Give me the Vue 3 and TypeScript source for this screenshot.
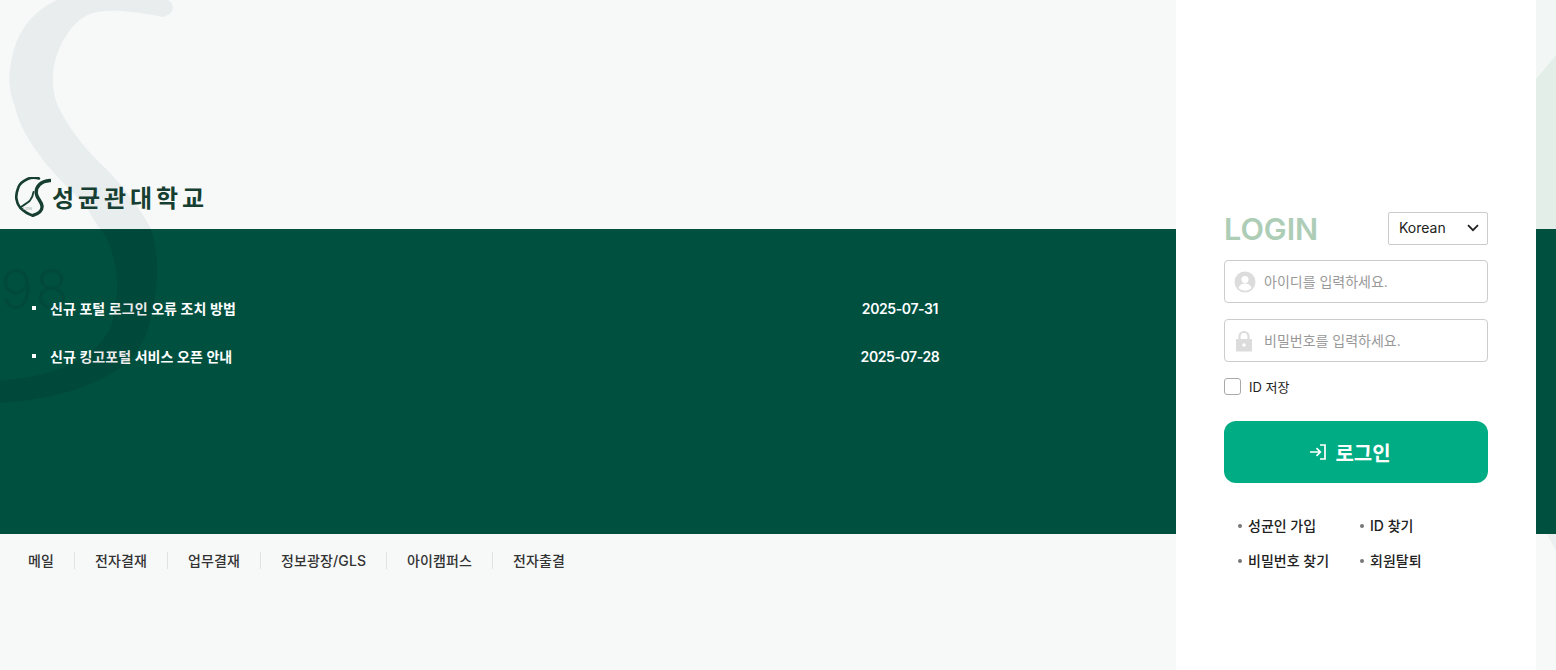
<script setup lang="ts">
import { ref } from 'vue'

interface Notice {
  id: number
  title: string
  date: string
}

const notices: Notice[] = [
  { id: 1, title: '신규 포털 로그인 오류 조치 방법', date: '2025-07-31' },
  { id: 2, title: '신규 킹고포털 서비스 오픈 안내', date: '2025-07-28' },
]

const shortcuts = ['메일', '전자결재', '업무결재', '정보광장/GLS', '아이캠퍼스', '전자출결']
const helpLinks = ['성균인 가입', 'ID 찾기', '비밀번호 찾기', '회원탈퇴']

const userId = ref('')
const password = ref('')
const saveId = ref(false)
const lang = ref('Korean')
</script>

<template>
  <div class="page">
    <div class="layout">
      <main class="main">
        <header class="brand">
          <svg class="emblem" width="36" height="40" viewBox="0 0 36 40" fill="none" stroke="#173f31" stroke-linecap="round" stroke-linejoin="round">
            <path d="M24 1.400C20 0.500 16 0.500 12.500 2C8 4 4.500 7 3.300 10.500C2 14 1 18 1.300 21.500C1.800 25 3 28 5 30.500C9 34.500 13 37 17 38.300" stroke-width="2.600" />
            <path d="M5 30.500C9 28 12.500 26 15 23.500C17 21 18 18.500 18.500 15" stroke-width="1.800" />
            <path d="M35 3.500C31 3.800 27 5 24.500 7.500C21.500 10.500 20.500 15 22 19C23.500 22.500 26.500 25 27 29C27.500 33.500 23.500 37 18 38.300" stroke-width="3.400" />
            <text x="7" y="33" font-size="5" fill="#9aa5a0" stroke="none" font-family="'Liberation Serif', serif">1398</text>
          </svg>
          <span class="brand-name">성균관대학교</span>
        </header>

        <section class="banner">
          <ul class="notices">
            <li v-for="notice in notices" :key="notice.id" class="notice">
              <span class="bullet"></span>
              <span class="notice-title">{{ notice.title }}</span>
              <span class="notice-date">{{ notice.date }}</span>
            </li>
          </ul>
        </section>

        <nav class="shortcuts">
          <a v-for="item in shortcuts" :key="item" class="shortcut">{{ item }}</a>
        </nav>
      </main>

      <aside class="panel">
        <div class="login-head">
          <h1 class="login-title">LOGIN</h1>
          <div class="lang">
            <select v-model="lang" class="lang-select">
              <option>Korean</option>
              <option>English</option>
            </select>
            <svg class="chevron" width="12" height="8" viewBox="0 0 12 8" fill="none" stroke="#222" stroke-width="1.800">
              <path d="M1 1.200l5 5 5-5" />
            </svg>
          </div>
        </div>

        <label class="field">
          <svg class="field-icon" width="22" height="22" viewBox="0 0 22 22">
            <circle cx="11" cy="11" r="10.500" fill="#dcdcdc" />
            <circle cx="11" cy="8.500" r="3.600" fill="#fff" />
            <path d="M4.500 17c1-3.400 3.600-4.600 6.500-4.600s5.500 1.200 6.500 4.600a9 9 0 0 1-13 0z" fill="#fff" />
          </svg>
          <input v-model="userId" class="field-input" type="text" placeholder="아이디를 입력하세요." />
        </label>

        <label class="field">
          <svg class="field-icon lock" width="18" height="22" viewBox="0 0 18 22">
            <path d="M4.500 10V6.500a4.500 4.500 0 0 1 9 0V10" fill="none" stroke="#dcdcdc" stroke-width="2.200" />
            <rect x="1" y="9" width="16" height="12.500" fill="#dcdcdc" />
            <circle cx="9" cy="15" r="1.800" fill="#fff" />
          </svg>
          <input v-model="password" class="field-input" type="password" placeholder="비밀번호를 입력하세요." />
        </label>

        <label class="save-id">
          <input v-model="saveId" class="save-check" type="checkbox" />
          <span>ID 저장</span>
        </label>

        <button class="login-btn" type="button">
          <svg width="18" height="18" viewBox="0 0 18 18" fill="none" stroke="#fff" stroke-width="1.700">
            <path d="M1 9h10M7.500 5.200L11.300 9l-3.800 3.800M11 2h5v14h-5" />
          </svg>
          <span>로그인</span>
        </button>

        <ul class="help">
          <li v-for="link in helpLinks" :key="link" class="help-item">{{ link }}</li>
        </ul>
      </aside>

      <div class="edge">
        <div class="edge-top"></div>
        <div class="edge-band"></div>
        <div class="edge-bottom"></div>
      </div>
    </div>

    <!-- watermark S sits over the left side of the page -->
    <div class="watermark" aria-hidden="true">
      <svg width="200" height="420" viewBox="0 0 200 420">
        <defs>
          <linearGradient id="s-fill" gradientUnits="userSpaceOnUse" x1="0" y1="0" x2="0" y2="420">
            <stop offset="0.545" stop-color="#12304a" stop-opacity="0.06" />
            <stop offset="0.545" stop-color="#000" stop-opacity="0.09" />
          </linearGradient>
        </defs>
        <path
          d="M57 0L168 0C175 4 175 14 163 17C135 11 105 8 90 14C70 22 55 50 53 73C52 90 55 100 60 110C70 130 85 148 97 160C115 177 135 200 150 227C160 250 160 290 147 333C138 355 125 365 117 370C90 388 50 400 0 403L0 380C40 378 70 367 90 353C105 340 113 325 113 317C118 295 118 280 115 267C112 250 108 240 103 233C95 222 90 214 87 207C70 190 55 175 43 160C30 143 19 125 15 107C11 95 8 85 10 70C12 55 15 42 22 31C30 17 42 7 57 0Z"
          fill="url(#s-fill)"
        />
      </svg>
      <span class="watermark-year">98</span>
    </div>
  </div>
</template>

<style>
body {
  margin: 0;
}
</style>

<style scoped>
.page {
  position: relative;
  height: 670px;
  overflow: hidden;
  background: #f6f9f8;
  font-family: Inter, 'Noto Sans CJK KR', sans-serif;
  color: #222;
}

.layout {
  display: flex;
  height: 100%;
}

.main {
  flex: 0 0 1176px;
  display: flex;
  flex-direction: column;
}

.brand {
  height: 229px;
  box-sizing: border-box;
  padding: 0 0 12px 15px;
  display: flex;
  align-items: flex-end;
  gap: 1px;
}

.emblem {
  display: block;
}

.brand-name {
  margin-bottom: 3px;
  font-family: 'Noto Sans CJK KR', sans-serif;
  font-size: 24px;
  line-height: 34px;
  font-weight: 700;
  letter-spacing: 3.900px;
  color: #173f31;
}

.banner {
  height: 305px;
  background: #005040;
  padding-top: 55px;
  box-sizing: border-box;
}

.notices {
  list-style: none;
  margin: 0;
  padding: 0 0 0 32px;
}

.notice {
  display: flex;
  align-items: center;
  height: 48px;
  color: #fff;
  font-size: 14px;
  font-weight: 600;
  letter-spacing: 0.040px;
}

.bullet {
  width: 4px;
  height: 4px;
  background: #fff;
  margin-right: 14px;
}

.notice-title {
  width: 800px;
}

.notice-date {
  width: 100px;
  text-align: center;
  letter-spacing: -0.400px;
}

.shortcuts {
  display: flex;
  padding: 18px 0 0 28px;
}

.shortcut {
  font-size: 14px;
  font-weight: 500;
  line-height: 17px;
  letter-spacing: 0.120px;
  color: #333;
  padding-right: 20px;
  margin-right: 20px;
  border-right: 1px solid #dfe3e2;
}

.shortcut:last-child {
  border-right: 0;
}

.panel {
  flex: 0 0 360px;
  box-sizing: border-box;
  background: #fff;
  padding: 212px 48px 0;
}

.login-head {
  display: flex;
  justify-content: space-between;
  align-items: center;
  height: 33px;
  margin-bottom: 15px;
}

.login-title {
  margin: 0;
  font-size: 30.500px;
  font-weight: 600;
  line-height: 33px;
  color: #aecdb6;
}

.lang {
  position: relative;
  width: 100px;
  height: 33px;
}

.lang-select {
  appearance: none;
  width: 100%;
  height: 100%;
  box-sizing: border-box;
  padding: 0 0 2px 10px;
  border: 1px solid #ccc;
  border-radius: 2px;
  background: #fff;
  font-family: inherit;
  font-size: 14px;
  color: #222;
}

.chevron {
  position: absolute;
  right: 9px;
  top: 12px;
  pointer-events: none;
}

.field {
  position: relative;
  display: block;
  height: 43px;
  margin-bottom: 16px;
}

.field-icon {
  position: absolute;
  left: 10px;
  top: 11px;
}

.field-icon.lock {
  left: 11px;
}

.field-input {
  width: 100%;
  height: 100%;
  box-sizing: border-box;
  padding: 0 10px 0 39px;
  border: 1px solid #ccc;
  border-radius: 4px;
  background: #fff;
  font-family: inherit;
  font-size: 14px;
  outline: none;
}

.field-input::placeholder {
  color: #999;
}

.save-id {
  display: flex;
  align-items: center;
  gap: 8px;
  height: 18px;
  margin-top: -1px;
  font-size: 13px;
  font-weight: 400;
  color: #222;
}

.save-check {
  appearance: none;
  width: 17px;
  height: 17px;
  margin: 0;
  border: 1px solid #aaa;
  border-radius: 3px;
  background: #fff;
}

.login-btn {
  display: flex;
  align-items: center;
  justify-content: center;
  gap: 8px;
  width: 100%;
  height: 62px;
  margin-top: 26px;
  padding: 0 12px 0 0;
  border: 0;
  border-radius: 12px;
  background: #00ac84;
  color: #fff;
  font-family: inherit;
  font-size: 20px;
  font-weight: 600;
}

.help {
  list-style: none;
  margin: 34px 0 0;
  padding: 0 0 0 14px;
  display: grid;
  grid-template-columns: 122px 1fr;
  row-gap: 17px;
}

.help-item {
  display: flex;
  align-items: center;
  gap: 6px;
  font-size: 14px;
  font-weight: 500;
  line-height: 18px;
  color: #222;
}

.help-item::before {
  content: '';
  width: 4px;
  height: 4px;
  border-radius: 50%;
  background: #777;
}

.edge {
  flex: 1;
  display: flex;
  flex-direction: column;
}

.edge-top {
  height: 229px;
  background: linear-gradient(130deg, #f2f7f5 0 31%, #e3eee8 31.500%);
}

.edge-band {
  height: 305px;
  background: #005040;
}

.edge-bottom {
  flex: 1;
  background: linear-gradient(62deg, #f6f9f8 0 90%, #eceff0 90.500%);
}

.watermark {
  position: absolute;
  left: 0;
  top: 0;
  width: 200px;
  height: 420px;
  pointer-events: none;
}

.watermark-year {
  position: absolute;
  left: 0;
  top: 258px;
  font-family: Inter, sans-serif;
  font-weight: 300;
  font-size: 55px;
  line-height: 62px;
  letter-spacing: 2px;
  color: rgba(0, 0, 0, 0.08);
}
</style>
